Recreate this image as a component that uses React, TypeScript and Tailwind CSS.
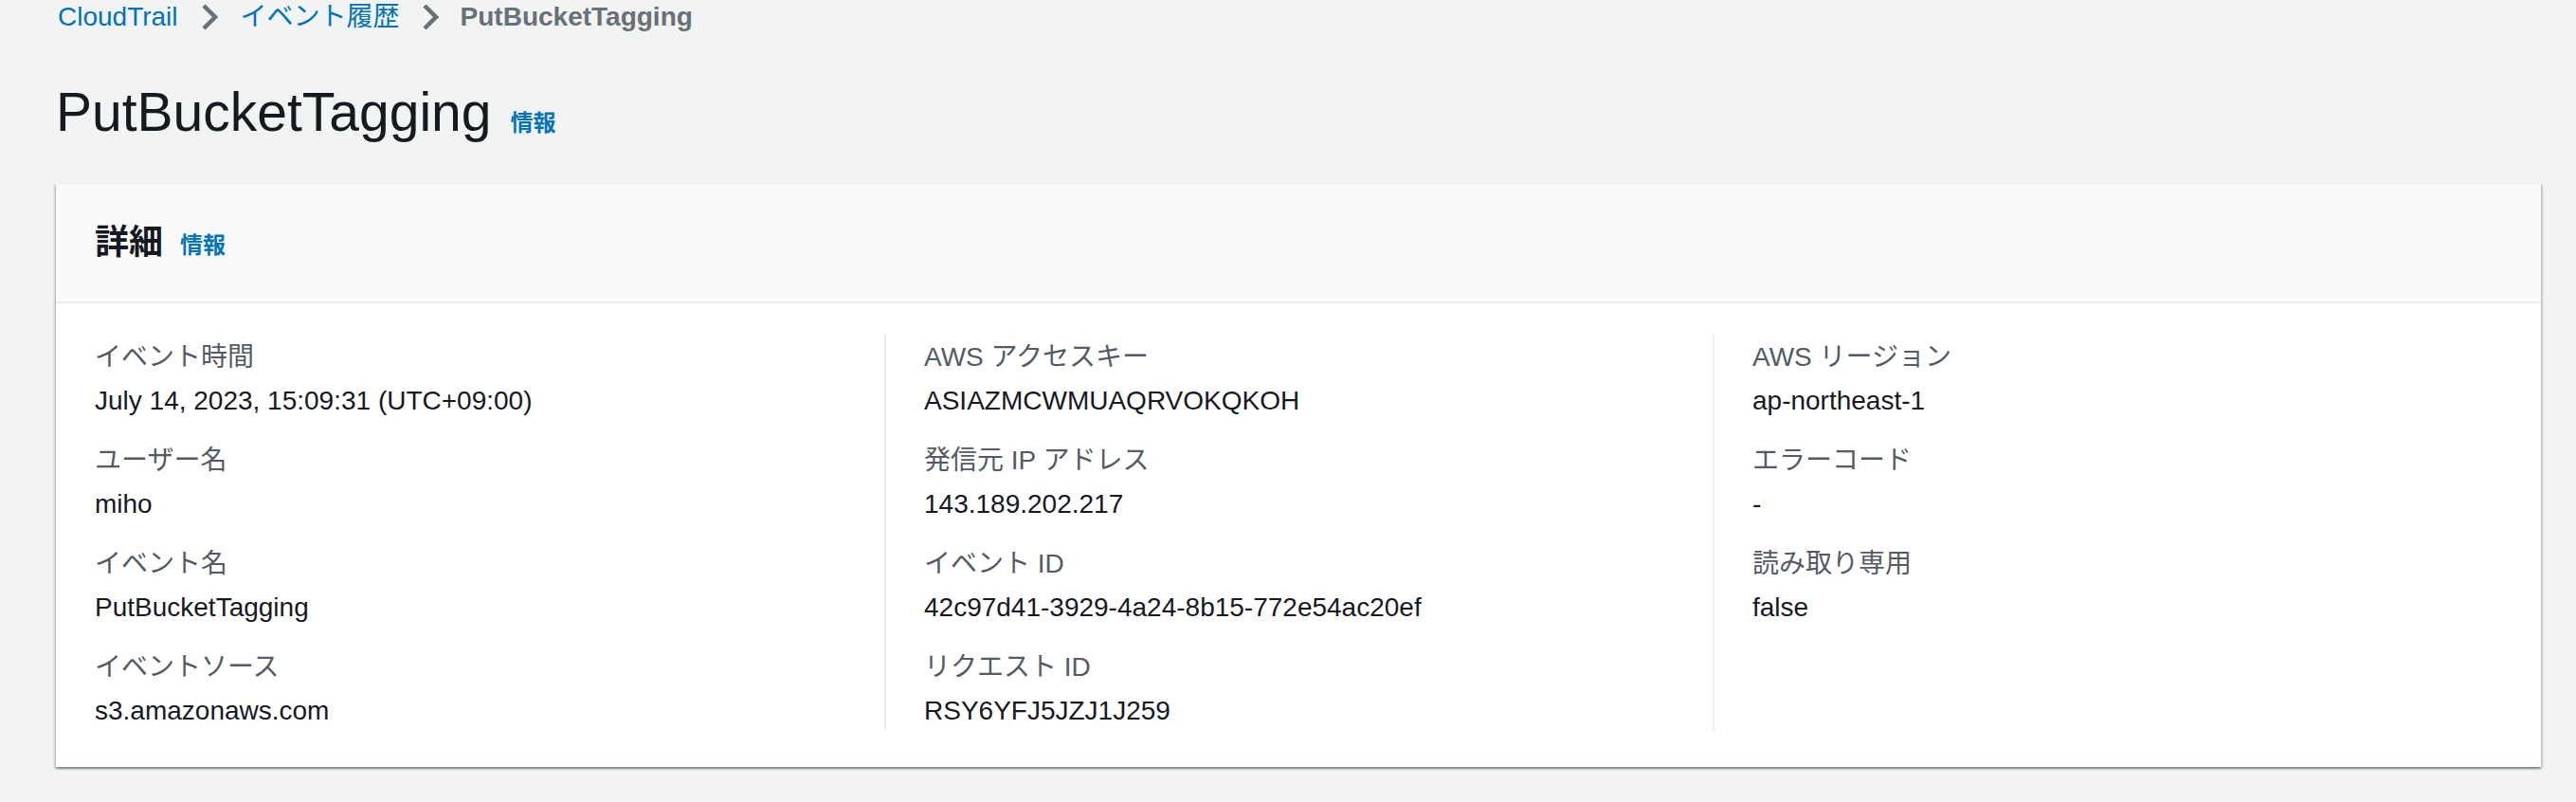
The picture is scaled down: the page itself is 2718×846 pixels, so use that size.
import type { SVGProps } from "react";

type Field = {
  label: string;
  value: string;
};

const columns: Field[][] = [
  [
    { label: "イベント時間", value: "July 14, 2023, 15:09:31 (UTC+09:00)" },
    { label: "ユーザー名", value: "miho" },
    { label: "イベント名", value: "PutBucketTagging" },
    { label: "イベントソース", value: "s3.amazonaws.com" },
  ],
  [
    { label: "AWS アクセスキー", value: "ASIAZMCWMUAQRVOKQKOH" },
    { label: "発信元 IP アドレス", value: "143.189.202.217" },
    { label: "イベント ID", value: "42c97d41-3929-4a24-8b15-772e54ac20ef" },
    { label: "リクエスト ID", value: "RSY6YFJ5JZJ1J259" },
  ],
  [
    { label: "AWS リージョン", value: "ap-northeast-1" },
    { label: "エラーコード", value: "-" },
    { label: "読み取り専用", value: "false" },
  ],
];

export default function App() {
  return (
    <div className="min-h-screen bg-[#f2f3f3] pl-[59px] pr-[37px] font-['Liberation_Sans','Noto_Sans_CJK_JP',sans-serif] text-[#16191f]">
      {/* breadcrumbs */}
      <nav className="flex h-[36px] items-center text-[28px] leading-[36px]">
        <a className="ml-[2px] text-[#0073bb]">CloudTrail</a>
        <IconChevron className="mx-[24px] h-[30px] w-[18px] text-[#687078]" />
        <a className="text-[#0073bb]">イベント履歴</a>
        <IconChevron className="mx-[23px] h-[30px] w-[18px] text-[#687078]" />
        <span className="font-bold text-[#687078]">PutBucketTagging</span>
      </nav>

      <div className="mt-[50px] flex items-baseline gap-[20px]">
        <h1 className="text-[57px] leading-[64px] font-normal">PutBucketTagging</h1>
        <a className="text-[24px] font-bold text-[#0073bb]">情報</a>
      </div>

      {/* details container */}
      <section className="mt-[43px] bg-white shadow-[0_2px_2px_0_rgba(0,28,36,0.3),2px_2px_2px_0_rgba(0,28,36,0.15),-2px_2px_2px_0_rgba(0,28,36,0.15)]">
        <header className="flex h-[127px] items-center gap-[18px] border-t border-b-2 border-[#eaeded] bg-[#fafafa] px-[41px]">
          <h2 className="text-[36px] font-bold">詳細</h2>
          <a className="mt-[6px] text-[24px] font-bold text-[#0073bb]">情報</a>
        </header>

        <div className="grid grid-cols-[833px_874px_1fr] px-[41px] pt-[32px] pb-[39px]">
          {columns.map((fields, i) => (
            <div
              key={i}
              className={
                i === 0
                  ? "flex flex-col gap-[23px] pt-[5px]"
                  : "flex flex-col gap-[23px] border-l-2 border-[#eaeded] pt-[5px] pl-[40px]"
              }
            >
              {fields.map((field) => (
                <div key={field.label} className="flex flex-col gap-[6px] text-[28px] leading-[40px]">
                  <div className="text-[#545b64]">{field.label}</div>
                  <div className="text-[#16191f]">{field.value}</div>
                </div>
              ))}
            </div>
          ))}
        </div>
      </section>
    </div>
  );
}

function IconChevron(props: SVGProps<SVGSVGElement>) {
  return (
    <svg viewBox="0 0 18 30" fill="none" stroke="currentColor" strokeWidth="4.5" {...props}>
      <path d="M3 3l12 12L3 27" />
    </svg>
  );
}
